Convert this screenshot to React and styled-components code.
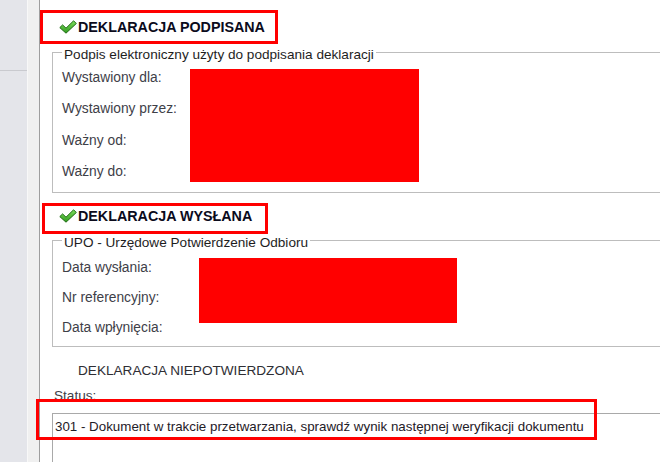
import React from "react";
import styled, { createGlobalStyle } from "styled-components";

const Global = createGlobalStyle`
  html, body { margin: 0; padding: 0; }
  body {
    width: 660px;
    height: 462px;
    overflow: hidden;
    background: #ffffff;
    font-family: "Liberation Sans", Arial, sans-serif;
  }
`;

const Page = styled.div`
  display: flex;
  width: 660px;
  height: 462px;
  overflow: hidden;
`;

const SidePanel = styled.div`
  width: 27px;
  flex: none;
  display: flex;
  flex-direction: column;
  background: #e4e5ea;
`;

const SideTop = styled.div`
  height: 70px;
  flex: none;
  border-bottom: 1px solid #c9cacf;
`;

const Gutter = styled.div`
  width: 11px;
  flex: none;
  background: #f0f0f0;
  border-left: 1px solid #f8f8f8;
  border-right: 1px solid #9e9e9e;
`;

const Content = styled.div`
  flex: 1;
  min-width: 0;
  display: flex;
  flex-direction: column;
  align-items: flex-start;
  background: #ffffff;
  & > * { flex-shrink: 0; }
`;

const TitleBox = styled.div`
  box-sizing: border-box;
  display: flex;
  align-items: center;
  gap: 1px;
  width: ${(p) => p.$w}px;
  height: ${(p) => p.$h}px;
  margin: ${(p) => p.$mt}px 0 0 ${(p) => p.$ml}px;
  padding: 0 0 ${(p) => p.$pb || 0}px ${(p) => p.$pl}px;
  border: 3px solid #ff0000;
`;

const TitleText = styled.span`
  font-weight: 700;
  font-size: 14.3px;
  line-height: 16px;
  color: #0b0b1c;
  white-space: nowrap;
`;

const CheckIcon = () => (
  <svg width="18" height="14" viewBox="0 0 18 14" aria-hidden="true">
    <defs>
      <linearGradient id="chk" x1="0" y1="0" x2="0" y2="1">
        <stop offset="0" stopColor="#7ede5c" />
        <stop offset="1" stopColor="#2f9a1f" />
      </linearGradient>
    </defs>
    <path
      d="M0.8 7.6 L3.6 4.9 L7 8.2 L14.6 0.8 L17.3 3.5 L7 13.2 Z"
      fill="url(#chk)"
      stroke="#1f6b14"
      strokeWidth="1"
      strokeLinejoin="round"
    />
  </svg>
);

const Group = styled.fieldset`
  box-sizing: border-box;
  align-self: stretch;
  margin: ${(p) => p.$mt}px -30px 0 12px;
  padding: ${(p) => p.$pt}px 0 ${(p) => p.$pb}px 9px;
  border: 1px solid #bdbdbd;
  min-width: 0;
`;

const Legend = styled.legend`
  padding: 5px 2px 0;
  font-size: 13.6px;
  line-height: 16px;
  color: #1e1e1e;
  white-space: nowrap;
`;

const FieldGrid = styled.div`
  display: grid;
  grid-template-columns: ${(p) => p.$label}px ${(p) => p.$value}px;
  grid-auto-rows: ${(p) => p.$row}px;
`;

const Label = styled.div`
  grid-column: 1;
  display: flex;
  align-items: center;
  font-size: 13.8px;
  line-height: 16px;
  color: #3e4048;
  white-space: nowrap;
`;

const Redact = styled.div`
  grid-column: 2;
  grid-row: 1 / span ${(p) => p.$span};
  align-self: start;
  margin-top: ${(p) => p.$mt}px;
  height: ${(p) => p.$h}px;
  background: #ff0000;
`;

const Notice = styled.div`
  margin: 16.5px 0 0 38px;
  font-size: 13.6px;
  line-height: 16px;
  color: #2e2e34;
  white-space: nowrap;
`;

const StatusArea = styled.div`
  position: relative;
  align-self: stretch;
  display: flex;
  flex-direction: column;
  margin-top: 9px;
`;

const StatusLabel = styled.div`
  margin-left: 14px;
  font-size: 13.6px;
  line-height: 16px;
  color: #3e4048;
`;

const StatusBox = styled.div`
  box-sizing: border-box;
  flex: none;
  margin: 9px -30px 0 12px;
  height: 70px;
  padding: 5px 0 0 2px;
  border: 1px solid #a9a9a9;
  font-size: 13.35px;
  line-height: 16px;
  color: #1f2028;
  white-space: nowrap;
`;

const Highlight = styled.div`
  position: absolute;
  left: -4px;
  top: 11px;
  width: 561px;
  height: 41px;
  box-sizing: border-box;
  border: 3px solid #ff0000;
  pointer-events: none;
`;

export default function App() {
  return (
    <>
      <Global />
      <Page>
        <SidePanel>
          <SideTop />
        </SidePanel>
        <Gutter />
        <Content>
          <TitleBox $w={238} $h={34} $mt={10} $ml={0} $pl={16}>
            <CheckIcon />
            <TitleText>DEKLARACJA PODPISANA</TitleText>
          </TitleBox>
          <Group $mt={-2.5} $pt={0} $pb={4}>
            <Legend>Podpis elektroniczny użyty do podpisania deklaracji</Legend>
            <FieldGrid $label={128} $value={229} $row={31.3}>
              <Label>Wystawiony dla:</Label>
              <Label>Wystawiony przez:</Label>
              <Label>Ważny od:</Label>
              <Label>Ważny do:</Label>
              <Redact $span={4} $mt={6.5} $h={113} />
            </FieldGrid>
          </Group>

          <TitleBox $w={226} $h={31} $mt={10.5} $ml={2} $pl={14} $pb={5}>
            <CheckIcon />
            <TitleText>DEKLARACJA WYSŁANA</TitleText>
          </TitleBox>
          <Group $mt={-4.5} $pt={2.5} $pb={2.5}>
            <Legend>UPO - Urzędowe Potwierdzenie Odbioru</Legend>
            <FieldGrid $label={137} $value={258} $row={30}>
              <Label>Data wysłania:</Label>
              <Label>Nr referencyjny:</Label>
              <Label>Data wpłynięcia:</Label>
              <Redact $span={3} $mt={5} $h={65} />
            </FieldGrid>
          </Group>

          <Notice>DEKLARACJA NIEPOTWIERDZONA</Notice>

          <StatusArea>
            <StatusLabel>Status:</StatusLabel>
            <StatusBox>
              301 - Dokument w trakcie przetwarzania, sprawdź wynik następnej weryfikacji dokumentu
            </StatusBox>
            <Highlight />
          </StatusArea>
        </Content>
      </Page>
    </>
  );
}
